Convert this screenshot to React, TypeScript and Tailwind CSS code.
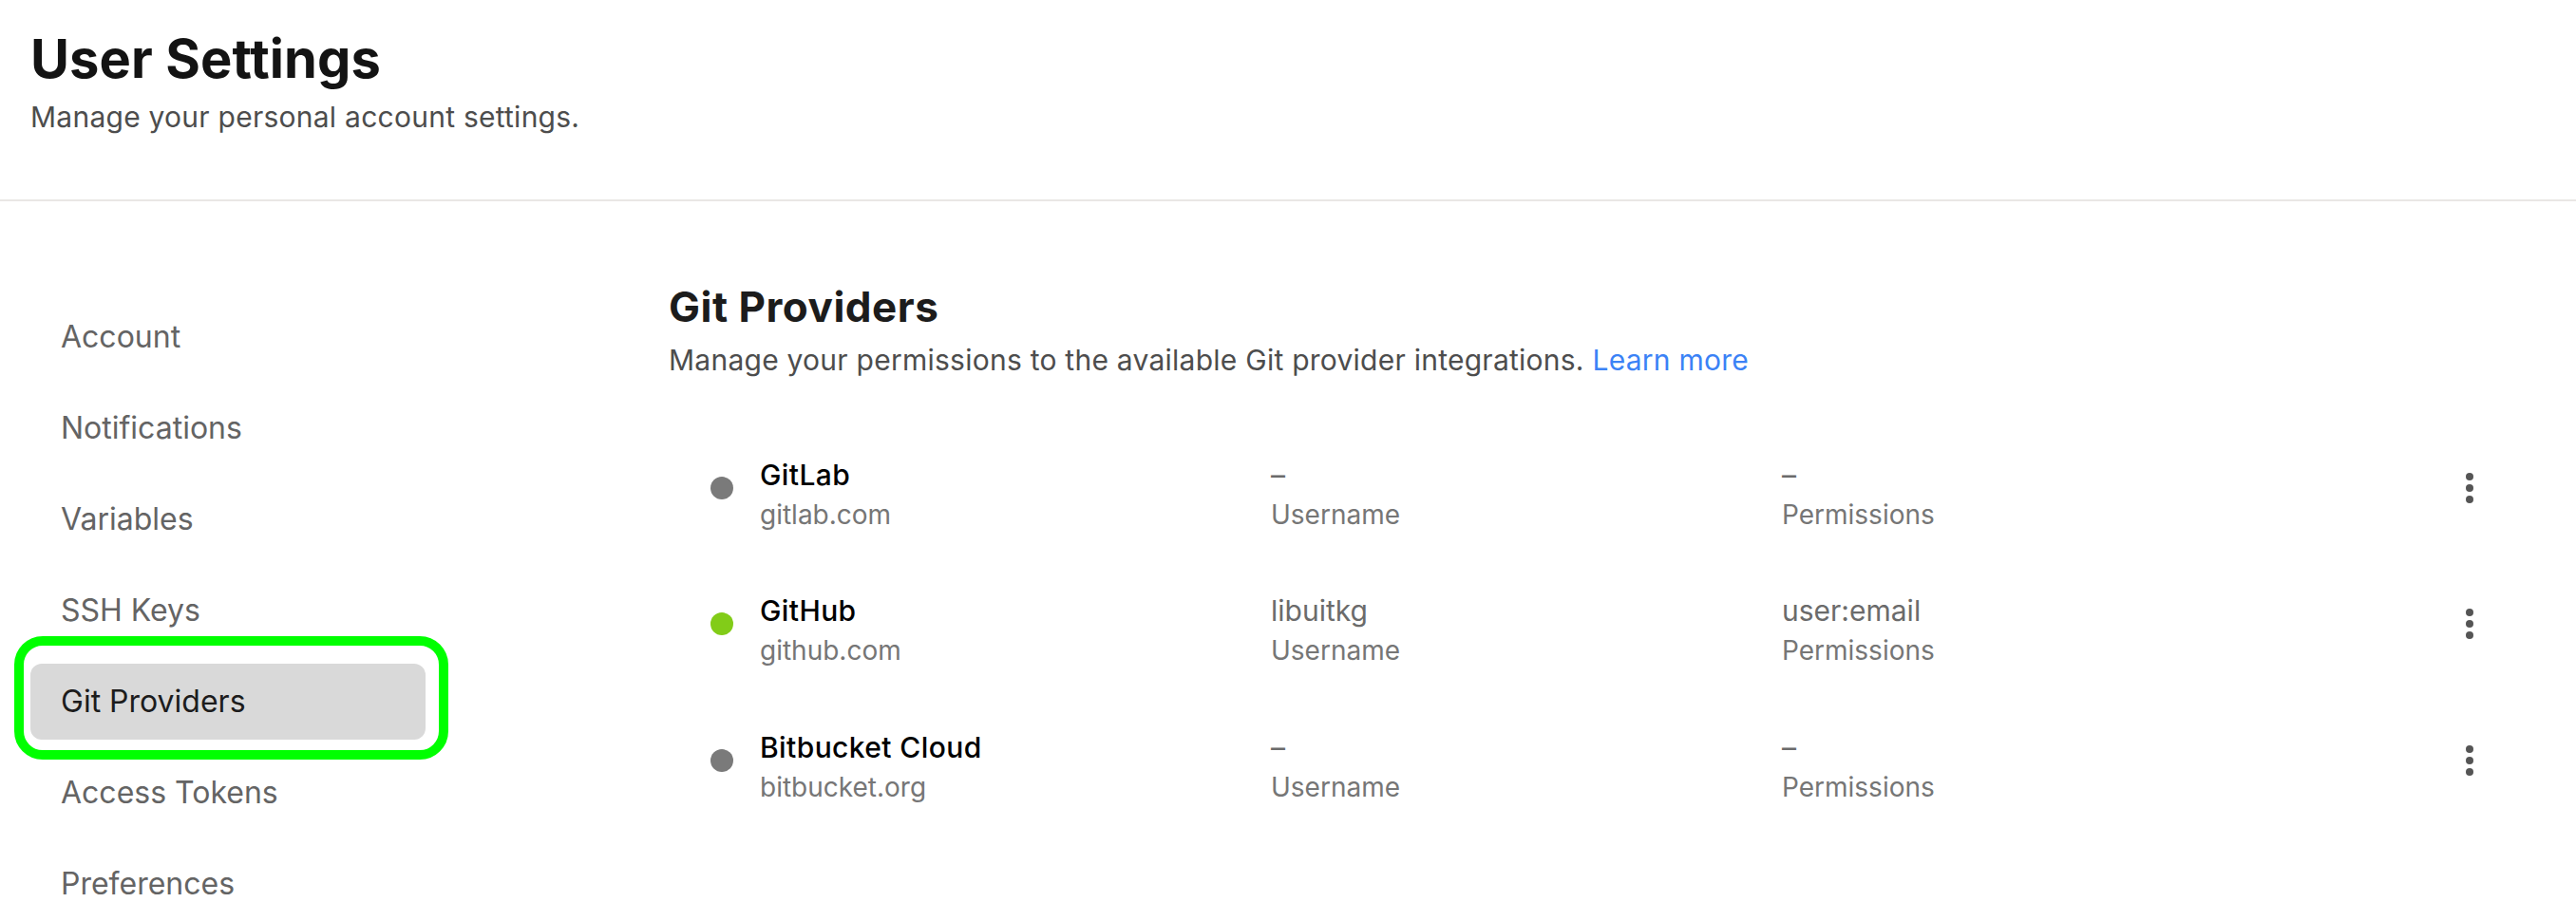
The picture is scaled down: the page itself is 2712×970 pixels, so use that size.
import { Fragment } from "react";

const navItems = [
  "Account",
  "Notifications",
  "Variables",
  "SSH Keys",
  "Git Providers",
  "Access Tokens",
  "Preferences",
];

const providers = [
  { name: "GitLab", domain: "gitlab.com", user: "–", perms: "–", connected: false },
  { name: "GitHub", domain: "github.com", user: "libuitkg", perms: "user:email", connected: true },
  { name: "Bitbucket Cloud", domain: "bitbucket.org", user: "–", perms: "–", connected: false },
];

const Kebab = () => (
  <button className="flex h-10 w-10 flex-col items-center justify-center gap-[4px]">
    <span className="h-2 w-2 rounded-full bg-[#555555]" />
    <span className="h-2 w-2 rounded-full bg-[#555555]" />
    <span className="h-2 w-2 rounded-full bg-[#555555]" />
  </button>
);

const Cell = ({ value, label, strong }: { value: string; label: string; strong?: boolean }) => (
  <div className="flex w-[538px] flex-col pt-3">
    <div
      className={
        strong
          ? "text-[30px] leading-[44px] font-medium tracking-[0.4px] text-black"
          : "text-[30px] leading-[44px] text-[#6b6b6b]"
      }
    >
      {value}
    </div>
    <div className="text-[28px] leading-[40px] text-[#767676]">{label}</div>
  </div>
);

export default function App() {
  return (
    <div className="min-h-screen bg-white font-['Inter',sans-serif] text-[#1c1c1c]">
      <header className="border-b-2 border-[#e9e7e5] px-8 pt-[29px] pb-[67px]">
        <h1 className="text-[56px] leading-[67px] font-bold tracking-[0.1px] text-[#131313]">
          User Settings
        </h1>
        <p className="mt-[7px] text-[30px] leading-[40px] tracking-[0.25px] text-[#4d4d4d]">
          Manage your personal account settings.
        </p>
      </header>

      <div className="flex">
        <nav className="flex w-[448px] shrink-0 flex-col gap-4 pt-[103px] pl-8">
          {navItems.map((item) => {
            const active = item === "Git Providers";
            return (
              <div
                key={item}
                className={
                  active
                    ? "relative flex h-20 items-center rounded-xl bg-[#d9d9d9] px-8 text-[32px] text-[#1c1c1c]"
                    : "flex h-20 items-center rounded-xl px-8 text-[32px] text-[#646464]"
                }
              >
                {item}
                {active && (
                  <div className="pointer-events-none absolute -top-[29px] -bottom-[21px] -left-[17px] -right-[24px] rounded-[30px] border-[10px] border-[#00ff00]" />
                )}
              </div>
            );
          })}
        </nav>

        <main className="flex-1 pt-[85px] pl-64 pr-[72px]">
          <h2 className="text-[44px] leading-[52px] font-bold tracking-[0.5px] text-[#1c1c1c]">
            Git Providers
          </h2>
          <p className="mt-[10px] text-[30px] leading-[40px] tracking-[0.25px] text-[#4d4d4d]">
            Manage your permissions to the available Git provider integrations.{" "}
            <a className="text-[#3b82f6]">Learn more</a>
          </p>

          <div className="mt-[43px] flex flex-col">
            {providers.map((p) => (
              <Fragment key={p.name}>
                <div className="flex h-[143.5px] items-center pl-[44px] pr-5">
                  <span
                    className={
                      p.connected
                        ? "h-6 w-6 shrink-0 rounded-full bg-[#82cc18]"
                        : "h-6 w-6 shrink-0 rounded-full bg-[#7a7a7a]"
                    }
                  />
                  <div className="ml-7 flex">
                    <Cell value={p.name} label={p.domain} strong />
                    <Cell value={p.user} label="Username" />
                    <Cell value={p.perms} label="Permissions" />
                  </div>
                  <div className="ml-auto">
                    <Kebab />
                  </div>
                </div>
              </Fragment>
            ))}
          </div>
        </main>
      </div>
    </div>
  );
}
